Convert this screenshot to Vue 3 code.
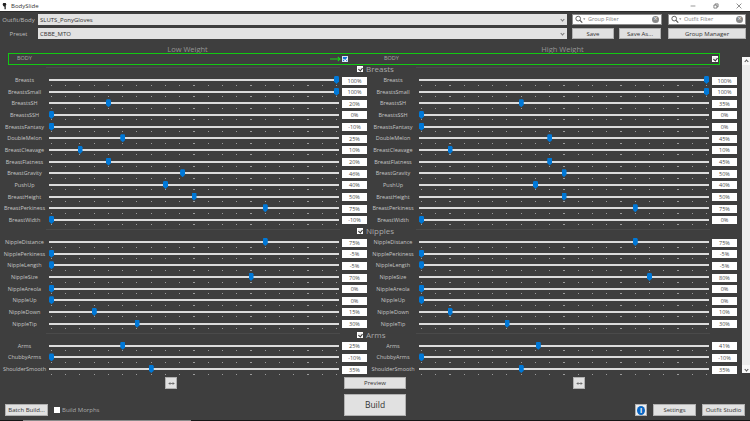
<template>
  <div class="window">
    <!-- Title bar -->
    <header class="titlebar">
      <svg class="app-icon" viewBox="0 0 8 10"><path d="M2 0h4l1 3-1 1v6H4V6L2 5 1 2Z" fill="#222" /></svg>
      <span class="app-title">BodySlide</span>
      <div class="win-controls">
        <svg viewBox="0 0 10 10"><path d="M1 5h8" stroke="#555" /></svg>
        <svg viewBox="0 0 10 10" fill="none" stroke="#444"><path d="M1.5 3.5h5v5h-5zM3.5 3.5v-2h5v5h-2" /></svg>
        <svg viewBox="0 0 10 10"><path d="M1 1l8 8M9 1l-8 8" stroke="#444" /></svg>
      </div>
    </header>

    <!-- Outfit and preset -->
    <div class="top-grid">
      <label class="top-label">Outfit/Body</label>
      <div class="combo">SLUTS_PonyGloves<span class="chevron"></span></div>
      <div class="search search--group">
        <svg class="search__icon" viewBox="0 0 12 10" fill="none" stroke="#555"><circle cx="4" cy="4" r="2.6" /><path d="M6 6l2.5 2.5" stroke-width="1.3" /><path d="M9.5 4h2.4l-1.2 1.3z" fill="#555" stroke="none" /></svg>
        <span class="search__text">Group Filter</span>
        <span class="search__clear">×</span>
      </div>
      <div class="search search--outfit">
        <svg class="search__icon" viewBox="0 0 12 10" fill="none" stroke="#555"><circle cx="4" cy="4" r="2.6" /><path d="M6 6l2.5 2.5" stroke-width="1.3" /><path d="M9.5 4h2.4l-1.2 1.3z" fill="#555" stroke="none" /></svg>
        <span class="search__text">Outfit Filter</span>
        <span class="search__clear">×</span>
      </div>

      <label class="top-label">Preset</label>
      <div class="combo">CBBE_MTO<span class="chevron"></span></div>
      <div class="preset-buttons">
        <button class="btn btn--save">Save</button>
        <button class="btn btn--save">Save As...</button>
      </div>
      <button class="btn btn--manager">Group Manager</button>
    </div>

    <div class="weights">
      <span>Low Weight</span>
      <span>High Weight</span>
    </div>

    <div class="middle">
      <div class="sliders">
        <!-- Filter row with the green highlight -->
        <div class="body-row">
          <span class="body-row__name">BODY</span>
          <svg class="body-row__arrow" viewBox="0 0 12 6" fill="none" stroke="#19d419" stroke-width="1.1"><path d="M0 3h11M8.5 .8 11 3 8.5 5.2" /></svg>
          <span class="check check--blue"></span>
          <span class="body-row__name body-row__name--high">BODY</span>
          <span class="check check--end"></span>
        </div>

        <div class="panel">
          <template v-for="section in sections" :key="section.name">
            <div class="section-head">
              <span class="section-head__rule"></span>
              <span class="check"></span>
              <span class="section-head__name">{{ section.name }}</span>
              <span class="section-head__rule"></span>
            </div>
            <div v-for="row in section.rows" :key="row[0]" class="row">
              <span class="row__label">{{ row[0] }}</span>
              <div class="slider">
                <span class="slider__track"></span>
                <span class="slider__ticks"></span>
                <span class="slider__thumb" :style="{ left: thumbPos(row[1]) }"></span>
              </div>
              <span class="row__value">{{ row[1] }}%</span>
              <span class="row__label">{{ row[0] }}</span>
              <div class="slider">
                <span class="slider__track"></span>
                <span class="slider__ticks"></span>
                <span class="slider__thumb" :style="{ left: thumbPos(row[2]) }"></span>
              </div>
              <span class="row__value">{{ row[2] }}%</span>
            </div>
          </template>
        </div>
      </div>

      <div class="scrollbar">
        <span class="scrollbar__arrow"><i class="scrollbar__chevron scrollbar__chevron--up"></i></span>
        <span class="scrollbar__arrow"><i class="scrollbar__chevron"></i></span>
      </div>
    </div>

    <!-- Bottom buttons -->
    <footer class="footer">
      <div class="footer__side">
        <button class="btn btn--mini">
          <svg viewBox="0 0 8 6" fill="none" stroke="#444" stroke-width=".8"><path d="M1 3h6M2.5 1.5 1 3l1.5 1.5M5.5 1.5 7 3 5.5 4.5" /></svg>
        </button>
        <div class="footer__line">
          <button class="btn btn--foot">Batch Build...</button>
          <span class="check check--plain"></span>
          <span class="morphs">Build Morphs</span>
        </div>
      </div>
      <div class="footer__center">
        <button class="btn btn--preview">Preview</button>
        <button class="btn btn--build">Build</button>
      </div>
      <div class="footer__side">
        <button class="btn btn--mini btn--mini-right">
          <svg viewBox="0 0 8 6" fill="none" stroke="#444" stroke-width=".8"><path d="M1 3h6M2.5 1.5 1 3l1.5 1.5M5.5 1.5 7 3 5.5 4.5" /></svg>
        </button>
        <div class="footer__line footer__line--right">
          <button class="btn btn--info"><span class="info-dot">i</span></button>
          <button class="btn btn--foot">Settings</button>
          <button class="btn btn--foot">Outfit Studio</button>
        </div>
      </div>
    </footer>
    <div class="under-strip"><span class="under-strip__window"></span></div>
  </div>
</template>

<script setup>
const sections = [
  {
    name: 'Breasts',
    rows: [
      ['Breasts', 100, 100],
      ['BreastsSmall', 100, 100],
      ['BreastsSH', 20, 35],
      ['BreastsSSH', 0, 0],
      ['BreastsFantasy', -10, 0],
      ['DoubleMelon', 25, 45],
      ['BreastCleavage', 10, 10],
      ['BreastFlatness', 20, 45],
      ['BreastGravity', 46, 50],
      ['PushUp', 40, 40],
      ['BreastHeight', 50, 50],
      ['BreastPerkiness', 75, 75],
      ['BreastWidth', -10, 0],
    ],
  },
  {
    name: 'Nipples',
    rows: [
      ['NippleDistance', 75, 75],
      ['NipplePerkiness', -5, -5],
      ['NippleLength', -5, -5],
      ['NippleSize', 70, 80],
      ['NippleAreola', 0, 0],
      ['NippleUp', 0, 0],
      ['NippleDown', 15, 10],
      ['NippleTip', 30, 30],
    ],
  },
  {
    name: 'Arms',
    rows: [
      ['Arms', 25, 41],
      ['ChubbyArms', -10, -10],
      ['ShoulderSmooth', 35, 35],
    ],
  },
]

// Negative values stay pinned at the left end of the track.
function thumbPos(value) {
  return `${Math.max(value, 0) * 2.85}px`
}
</script>

<style>
html,
body {
  margin: 0;
  background: #3e3e3e;
}
</style>

<style scoped>
.window {
  width: 750px;
  height: 421px;
  overflow: hidden;
  display: flex;
  flex-direction: column;
  background: #3e3e3e;
  color: #bdbdbd;
  font-family: 'Open Sans', 'Liberation Sans', sans-serif;
  font-size: 6px;
  line-height: 1;
}

.titlebar {
  height: 12px;
  box-sizing: border-box;
  flex-shrink: 0;
  padding-left: 2px;
  display: flex;
  align-items: center;
  background: #fff;
  border-bottom: 1px solid #2b2b2b;
}

.app-icon {
  width: 5px;
  height: 8px;
}

.app-title {
  margin-left: 4px;
  font-size: 6px;
  color: #333;
}

.win-controls {
  margin-left: auto;
  display: flex;
  gap: 17px;
  padding-right: 8px;
}

.win-controls svg {
  width: 6px;
  height: 6px;
}

.top-grid {
  height: 29px;
  box-sizing: border-box;
  flex-shrink: 0;
  padding-top: 2px;
  display: grid;
  grid-template-columns: 35px 532px 95px 84px;
  grid-template-rows: 11px 11px;
  row-gap: 3px;
}

.top-label {
  align-self: center;
  text-align: center;
  font-size: 6px;
  padding-left: 2px;
}

.combo {
  position: relative;
  margin-left: 3px;
  padding-left: 2px;
  display: flex;
  align-items: center;
  background: #e2e2e2;
  color: #333;
  font-size: 6px;
}

.chevron {
  position: absolute;
  right: 3px;
  top: 3.5px;
  width: 2px;
  height: 2px;
  border-right: 1px solid #777;
  border-bottom: 1px solid #777;
  transform: rotate(45deg);
}

.search {
  margin-left: 5px;
  display: flex;
  align-items: center;
  background: #fff;
  border: 1px solid #8c8c8c;
  box-sizing: border-box;
}

.search--outfit {
  margin-left: 6px;
}

.search__icon {
  width: 12px;
  height: 9px;
  margin-left: 1px;
  flex-shrink: 0;
}

.search__text {
  margin-left: 2px;
  color: #808080;
  font-size: 5.5px;
}

.search__clear {
  margin-left: auto;
  margin-right: 2px;
  width: 7px;
  height: 7px;
  border-radius: 50%;
  background: #8a8a8a;
  color: #eee;
  font-size: 7px;
  line-height: 6px;
  text-align: center;
}

.preset-buttons {
  margin-left: 5px;
  display: flex;
  gap: 5px;
}

.btn {
  padding: 0;
  background: #e1e1e1;
  border: 1px solid #b0b0b0;
  box-sizing: border-box;
  color: #333;
  font-family: inherit;
  font-size: 6px;
  line-height: 1;
}

.btn--save {
  width: 42px;
}

.btn--manager {
  margin-left: 6px;
  margin-right: 0;
}

.weights {
  height: 12px;
  flex-shrink: 0;
  display: grid;
  grid-template-columns: 375px 375px;
  justify-items: center;
  padding-top: 5px;
  box-sizing: border-box;
  font-size: 7.5px;
  color: #949494;
}

.middle {
  height: 321px;
  flex-shrink: 0;
  display: grid;
  grid-template-columns: 737px 13px;
}

.sliders {
  min-width: 0;
}

.body-row {
  width: 712px;
  height: 12px;
  margin-left: 8px;
  padding-left: 8px;
  box-sizing: border-box;
  display: flex;
  align-items: center;
  border: 1.3px solid #12c912;
}

.body-row__name {
  color: #a8a8a8;
  font-size: 5.5px;
}

.body-row__name--high {
  margin-left: 36px;
}

.body-row__arrow {
  width: 11px;
  height: 6px;
  margin-left: 298px;
  margin-right: 1px;
}

.check {
  width: 6px;
  height: 6px;
  flex-shrink: 0;
  box-sizing: border-box;
  background: #eee;
  border: 1px solid #fff;
  position: relative;
}

.check::after {
  content: '';
  position: absolute;
  left: 1px;
  top: 0;
  width: 2px;
  height: 3px;
  border-right: 1px solid #333;
  border-bottom: 1px solid #333;
  transform: rotate(40deg);
}

.check--blue {
  background: #1473d6;
  border-color: #cfe3f7;
}

.check--blue::after {
  border-color: #fff;
}

.check--end {
  margin-left: auto;
  margin-right: 1px;
}

.check--plain {
  background: #fff;
}

.check--plain::after {
  display: none;
}

.panel {
  margin-top: -1.5px;
}

.section-head {
  height: 10.5px;
  width: 710px;
  padding-left: 46px;
  box-sizing: border-box;
  display: flex;
  align-items: center;
}

.section-head .check {
  margin-left: 17px;
}

.section-head__rule {
  width: 294px;
  height: 1px;
  margin-top: -2px;
  background: #4a4a4a;
}

.section-head__name {
  width: 50px;
  margin-left: 3px;
  font-size: 8px;
  color: #a9a9a9;
}

.row {
  height: 11.67px;
  display: grid;
  grid-template-columns: 49px 290px 28px 52px 290px 28px;
}

.row__label {
  padding-top: 4px;
  text-align: center;
  white-space: nowrap;
  font-size: 5.5px;
  color: #c4c4c4;
}

.row__value {
  width: 25px;
  height: 8px;
  margin: 2.5px 0 0 3px;
  background: #fff;
  color: #4a4a4a;
  text-align: center;
  font-size: 5.5px;
  line-height: 8px;
}

.slider {
  position: relative;
  height: 100%;
}

.slider__track {
  display: block;
  height: 2px;
  margin-top: 5px;
  background: #dcdcdc;
}

.slider__ticks {
  position: absolute;
  left: 2px;
  right: 0;
  top: 10.5px;
  height: 1px;
  background: repeating-linear-gradient(90deg, #9c9c9c 0 1px, transparent 1px 14.25px);
}

.slider__thumb {
  position: absolute;
  top: 2px;
  width: 5px;
  height: 8px;
  background: #0078d7;
  clip-path: polygon(15% 0, 85% 0, 100% 15%, 100% 70%, 50% 100%, 0 70%, 0 15%);
}

.scrollbar {
  width: 8px;
  height: 316px;
  margin: 4px 0 0 5px;
  display: flex;
  flex-direction: column;
  justify-content: space-between;
  background: #ececec;
}

.scrollbar__arrow {
  height: 8px;
  display: flex;
  align-items: center;
  justify-content: center;
  background: #f8f8f8;
}

.scrollbar__chevron {
  width: 2px;
  height: 2px;
  border-right: 1px solid #555;
  border-bottom: 1px solid #555;
  transform: rotate(45deg);
}

.scrollbar__chevron--up {
  transform: rotate(225deg);
}

.footer {
  flex: 1;
  min-height: 0;
  display: grid;
  grid-template-columns: 344px 62px 344px;
}

.footer__side {
  display: flex;
  flex-direction: column;
}

.btn--mini {
  width: 12px;
  height: 12px;
  margin: 3px 0 0 165px;
  display: flex;
  align-items: center;
  justify-content: center;
}

.btn--mini svg {
  width: 7px;
  height: 5px;
}

.btn--mini-right {
  margin-left: 167px;
}

.footer__line {
  margin-top: 15px;
  padding-left: 5px;
  display: flex;
  align-items: center;
}

.footer__line--right {
  justify-content: flex-end;
  padding-right: 5px;
  gap: 6px;
}

.btn--foot {
  width: 43px;
  height: 12px;
}

.morphs {
  margin-left: 2px;
  color: #aaa;
}

.footer__line .check--plain {
  margin-left: 6px;
}

.footer__center {
  display: flex;
  flex-direction: column;
}

.btn--preview {
  height: 11.5px;
  margin-top: 3px;
}

.btn--build {
  height: 22px;
  margin-top: 5.5px;
  font-size: 8.5px;
}

.btn--info {
  width: 12px;
  height: 12px;
  display: flex;
  align-items: center;
  justify-content: center;
  background: #eee;
}

.info-dot {
  width: 8px;
  height: 9px;
  border-radius: 50%;
  background: #0b66c2;
  color: #fff;
  font-weight: 700;
  font-size: 7px;
  line-height: 9px;
  text-align: center;
}

.under-strip {
  height: 1.5px;
  flex-shrink: 0;
  background: #151515;
}

.under-strip__window {
  display: block;
  width: 168px;
  height: 100%;
  margin-left: 23px;
  background: #8a8a8a;
}
</style>
